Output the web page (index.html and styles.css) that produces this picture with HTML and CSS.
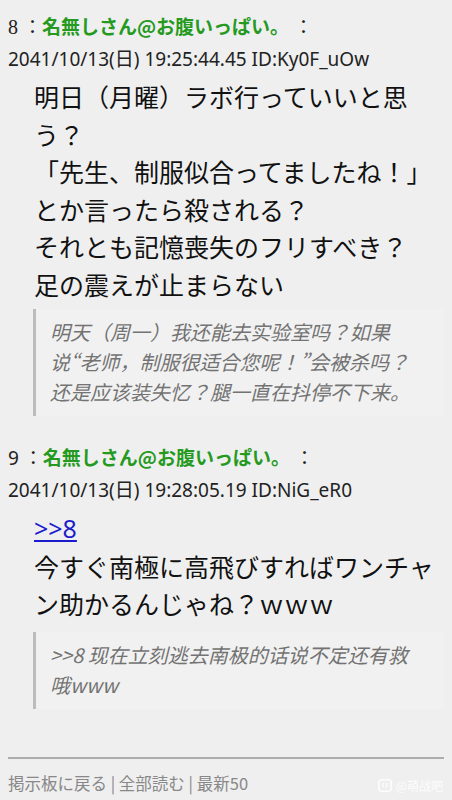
FILE: index.html
```html
<!DOCTYPE html>
<html lang="ja">
<head>
  <meta charset="UTF-8">
  <title>名無しさん@お腹いっぱい。</title>
  <link rel="stylesheet" href="styles.css">
</head>
<body>
  <div class="thread">
    <div class="post">
      <div class="head"><span class="num serif">8</span> ：<b class="name">名無しさん@お腹いっぱい。</b> ：</div>
      <div class="date">2041/10/13(日) 19:25:44.45 ID:Ky0F_uOw</div>
      <div class="body">明日（月曜）ラボ行っていいと思う？<br>「先生、制服似合ってましたね！」<br>とか言ったら殺される？<br>それとも記憶喪失のフリすべき？<br>足の震えが止まらない</div>
      <blockquote class="trans">明天（周一）我还能去实验室吗？如果<br>说“老师，制服很适合您呢！”会被杀吗？<br>还是应该装失忆？腿一直在抖停不下来。</blockquote>
    </div>

    <div class="post">
      <div class="head"><span class="num">9</span> ：<b class="name">名無しさん@お腹いっぱい。</b> ：</div>
      <div class="date">2041/10/13(日) 19:28:05.19 ID:NiG_eR0</div>
      <div class="body"><a href="#" class="anchor">&gt;&gt;8</a><br>今すぐ南極に高飛びすればワンチャン助かるんじゃね？ｗｗｗ</div>
      <blockquote class="trans">&gt;&gt;8 现在立刻逃去南极的话说不定还有救<br>哦www</blockquote>
    </div>
  </div>

  <div class="footer">
    <a href="#">掲示板に戻る</a> | <a href="#">全部読む</a> | <a href="#">最新50</a>
  </div>

  <div class="watermark">
    <svg width="14" height="13" viewBox="0 0 14 13"><rect x="0.8" y="0.8" width="12.4" height="11.4" rx="3" fill="none" stroke="#fff" stroke-width="1.6"/><path d="M5 4v4.5M8.5 4v4.5" stroke="#fff" stroke-width="1.4"/></svg>
    <span>@萌战吧</span>
  </div>
</body>
</html>
```

FILE: styles.css
```css
body {
  margin: 0;
  min-height: 800px;
  position: relative;
  background: #efefef;
  color: #222;
  font-family: "Noto Sans", "Noto Sans CJK JP", sans-serif;
}

.thread {
  padding: 10px 8px 0;
}

.post {
  margin-bottom: 25px;
}

.head,
.date {
  font-size: 19px;
  line-height: 32px;
}

.serif {
  font-family: "Liberation Serif", serif;
  font-size: 20px;
}

.name {
  color: #259a1f;
  font-family: "Noto Sans CJK JP", sans-serif;
}

.body {
  margin: 3px 0 0 26px;
  font-family: "Noto Sans CJK JP", sans-serif;
  font-size: 25px;
  line-height: 37.5px;
  color: #111;
}

.anchor {
  color: #1c1ccc;
  font-family: "Noto Sans", sans-serif;
}

.trans {
  margin: 6px 0 0 25px;
  padding: 8px 6px 9px 14px;
  border-left: 3px solid #bcbcbc;
  background: #f1f1f1;
  font-family: "Noto Sans CJK SC", sans-serif;
  font-style: italic;
  font-size: 20px;
  line-height: 30px;
  color: #737373;
}

.post + .post .trans {
  margin-top: 9px;
}

.footer {
  margin: 48px 8px 0;
  padding-top: 12px;
  border-top: 2px solid #acacac;
  font-family: "Noto Sans CJK JP", sans-serif;
  font-size: 16.5px;
  line-height: 24px;
  color: #888;
}

.footer a {
  color: #888;
  text-decoration: none;
}

.watermark {
  position: absolute;
  right: 9px;
  bottom: 6px;
  display: flex;
  align-items: center;
  gap: 4px;
  opacity: 0.85;
  color: #fff;
  font-family: "Noto Sans CJK SC", sans-serif;
  font-size: 12px;
}
```
